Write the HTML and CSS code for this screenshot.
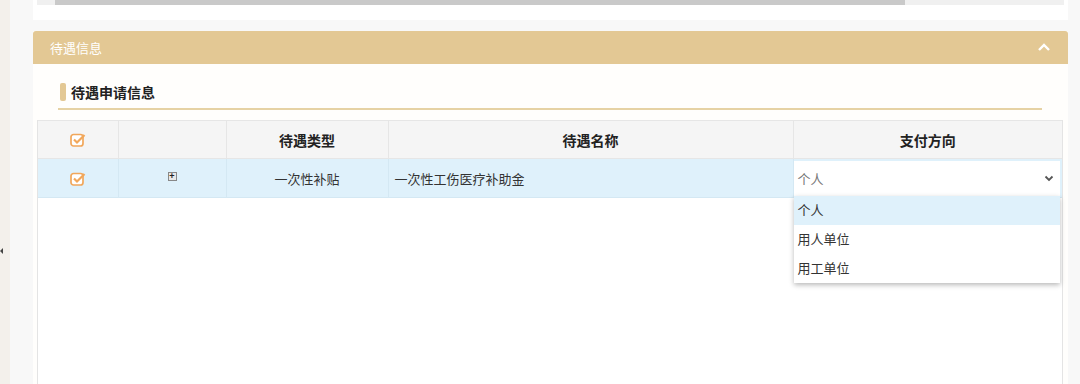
FILE: index.html
```html
<!DOCTYPE html>
<html lang="zh-CN">
  <head>
    <meta charset="UTF-8" />
    <meta name="viewport" content="width=device-width, initial-scale=1.0" />
    <title>待遇信息</title>
    <link rel="stylesheet" href="styles.css">
  </head>
  <body>
  <div class="side">
    <span class="side-arrow"></span>
  </div>
  <div class="main">
    <div class="top-card">
      <div class="hscroll">
        <div class="hscroll-thumb"></div>
      </div>
    </div>

    <div class="panel">
      <div class="panel-head">
        <span class="panel-title">待遇信息</span>
        <svg class="collapse" width="14" height="10" viewBox="0 0 14 10">
          <path d="M2 8 L7 3 L12 8" fill="none" stroke="#fff" stroke-width="2.4"/>
        </svg>
      </div>
      <div class="panel-body">
        <div class="section-title">
          <span class="section-bar"></span>
          待遇申请信息
        </div>

        <div class="grid-wrap">
          <table class="grid">
            <colgroup>
              <col class="c1"><col class="c2"><col class="c3"><col class="c4"><col class="c5">
            </colgroup>
            <thead>
              <tr>
                <th>
                  <svg class="chk" width="16" height="15" viewBox="0 0 16 15">
                    <rect x="1" y="2.5" width="12" height="11.5" rx="2.5" fill="#fff" stroke="#f1a75b" stroke-width="1.7"/>
                    <path d="M4 7.5 L7 10.5 L14.5 3" fill="none" stroke="#f1a75b" stroke-width="2.2"/>
                  </svg>
                </th>
                <th></th>
                <th>待遇类型</th>
                <th>待遇名称</th>
                <th>支付方向</th>
              </tr>
            </thead>
            <tbody>
              <tr class="selected">
                <td class="center">
                  <svg class="chk" width="16" height="15" viewBox="0 0 16 15">
                    <rect x="1" y="2.5" width="12" height="11.5" rx="2.5" fill="#fff" stroke="#f1a75b" stroke-width="1.7"/>
                    <path d="M4 7.5 L7 10.5 L14.5 3" fill="none" stroke="#f1a75b" stroke-width="2.2"/>
                  </svg>
                </td>
                <td class="center top"><span class="expand">+</span></td>
                <td class="center">一次性补贴</td>
                <td>一次性工伤医疗补助金</td>
                <td class="pick-cell">
                  <div class="select">
                    <span>个人</span>
                    <svg width="10" height="7" viewBox="0 0 10 7">
                      <path d="M1.5 1.5 L5 5 L8.5 1.5" fill="none" stroke="#555" stroke-width="1.8"/>
                    </svg>
                  </div>
                  <ul class="options">
                    <li class="active">个人</li>
                    <li>用人单位</li>
                    <li>用工单位</li>
                  </ul>
                </td>
              </tr>
            </tbody>
          </table>
          <div class="grid-empty"></div>
        </div>
      </div>
    </div>
  </div>
  </body>
</html>
```

FILE: styles.css
```css
*
{
    box-sizing: border-box;
}
body
{
    margin: 0;
    height: 384px;
    overflow: hidden;
    display: flex;
    background: #f8f8f8;
    font-family: "Liberation Sans", "Noto Sans CJK SC", sans-serif;
    font-size: 13px;
    color: #333;
}
.side
{
    position: relative;
    width: 10px;
    background: #f3f0eb;
}
.side-arrow
{
    position: absolute;
    left: 0;
    top: 248px;
    border-top: 3px solid transparent;
    border-bottom: 3px solid transparent;
    border-right: 3px solid #444;
}
.main
{
    flex: 1;
    padding: 0 12px 0 23px;
}
.top-card
{
    height: 20px;
    background: #fff;
    padding: 0 4px;
}
.hscroll
{
    height: 5px;
    background: #f0f0f0;
    padding-left: 18px;
    padding-right: 159px;
}
.hscroll-thumb
{
    height: 5px;
    background: #c9c9c9;
}
.panel
{
    margin-top: 11px;
    background: #fffefc;
    height: 353px;
}
.panel-head
{
    height: 33px;
    background: #e3c894;
    border-radius: 3px 3px 0 0;
    display: flex;
    align-items: center;
    justify-content: space-between;
    padding: 0 17px 0 17px;
}
.panel-title
{
    color: #fff;
    font-size: 13px;
}
.collapse
{
    margin-top: -1px;
}
.panel-body
{
    padding: 19px 5px 0 4px;
}
.section-title
{
    display: flex;
    align-items: center;
    margin: 0 21px 10px 21px;
    padding: 0 0 7px 2px;
    border-bottom: 2px solid #e6d2a4;
    font-size: 14px;
    font-weight: bold;
    color: #222;
    height: 27px;
}
.section-bar
{
    width: 6px;
    height: 18px;
    background: #e3c894;
    border-radius: 2px;
    margin-right: 5px;
}
.grid-wrap
{
    border-left: 1px solid #e4e4e4;
    border-right: 1px solid #e4e4e4;
    background: #fff;
    height: 265px;
}
.grid
{
    width: 100%;
    border-collapse: collapse;
    table-layout: fixed;
}
.c1 { width: 80px; }
.c2 { width: 108px; }
.c3 { width: 162px; }
.c4 { width: 405px; }
th
{
    height: 38px;
    background: #f5f5f5;
    font-size: 14px;
    font-weight: bold;
    color: #222;
    text-align: center;
    border-right: 1px solid #e6e6e6;
    border-top: 1px solid #e6e6e6;
    border-bottom: 1px solid #e6e6e6;
}
td
{
    height: 39px;
    padding: 0 6px;
    border-right: 1px solid #d4e8f3;
    border-bottom: 1px solid #d4e8f3;
}
th:last-child, td:last-child
{
    border-right: none;
}
.selected td
{
    background: #dff1fb;
}
.center
{
    text-align: center;
}
.top
{
    vertical-align: top;
    padding-top: 8px;
}
.chk
{
    display: block;
    margin: 0 auto;
}
.expand
{
    display: inline-block;
    width: 9px;
    height: 9px;
    border: 1px solid #888;
    background: #e8e8e8;
    font-size: 9px;
    line-height: 7px;
    font-weight: bold;
    color: #222;
    text-align: center;
}
.pick-cell
{
    position: relative;
    padding: 0 2px 0 0;
}
.select
{
    height: 35px;
    background: #fff;
    display: flex;
    align-items: center;
    justify-content: space-between;
    padding: 0 6px 0 4px;
    color: #777;
}
.options
{
    position: absolute;
    left: 0;
    right: 2px;
    top: 37px;
    margin: 0;
    padding: 0;
    list-style: none;
    background: #fff;
    box-shadow: 0 2px 5px rgba(0, 0, 0, 0.28);
    z-index: 2;
}
.options li
{
    height: 29px;
    line-height: 29px;
    padding-left: 4px;
    color: #333;
}
.options .active
{
    background: #dff1fb;
}
```
